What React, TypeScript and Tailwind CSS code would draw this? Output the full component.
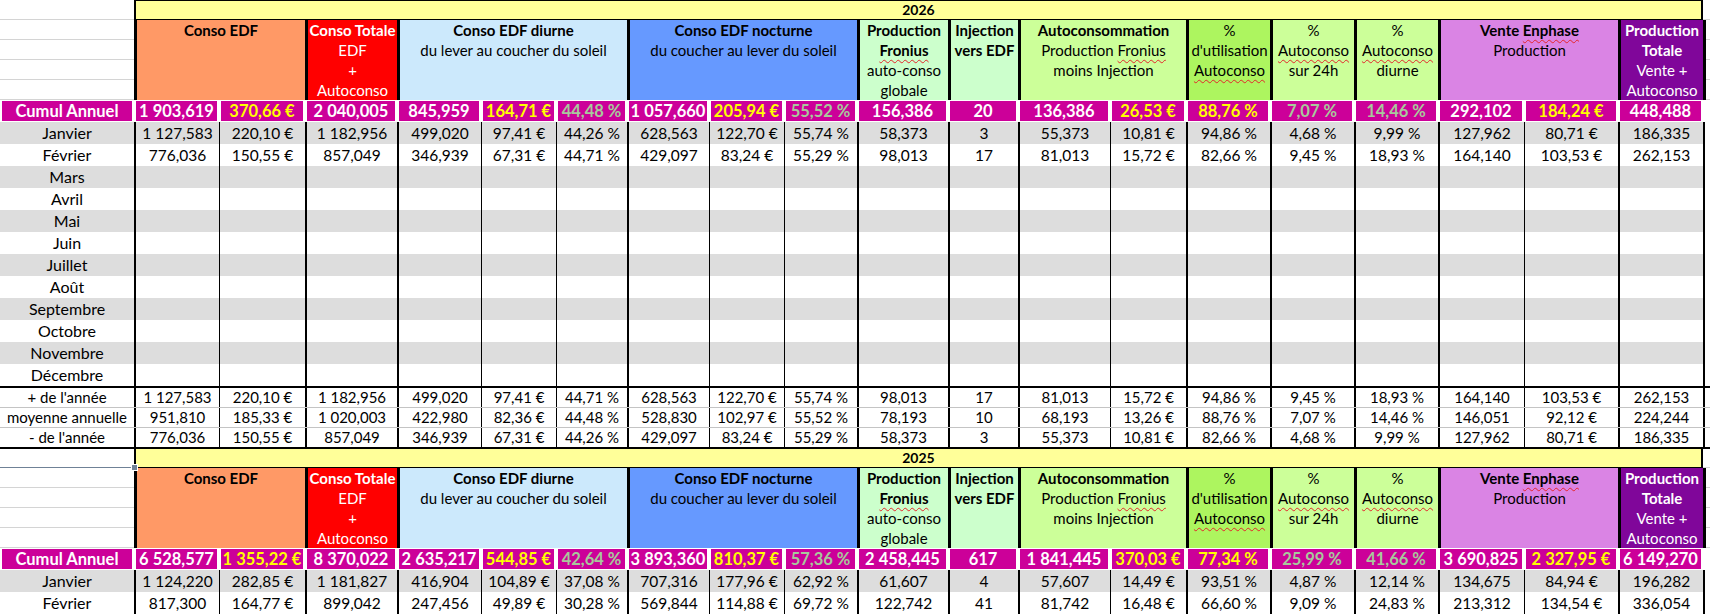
import React from 'react';

type Tone = 'w' | 'y' | 'g';
type CumulCell = [string, Tone];

// 134 px de libellés, 19 colonnes de données, une marge de feuille à droite
const COLS =
  'grid grid-cols-[134px_85px_86px_92px_84px_75px_71px_82px_75px_73px_91px_70px_92px_76px_84px_84px_84px_86px_94px_85px_7px]';

// true = début de groupe (trait épais), false = sous-colonne (trait fin)
const THICK = [true, false, true, true, false, false, true, false, false, true, true, true, false, true, true, true, true, false, true];

const edge = (i: number) => (THICK[i] ? 'border-l-2 border-black' : 'border-l border-black');

const MONTHS = ['Janvier', 'Février', 'Mars', 'Avril', 'Mai', 'Juin', 'Juillet', 'Août', 'Septembre', 'Octobre', 'Novembre', 'Décembre'];

const TONE: Record<Tone, string> = {
  w: 'text-white',
  y: 'text-[#ffff00]',
  g: 'text-[#a8c99c]',
};

const Wavy = ({ children }: { children: React.ReactNode }) => (
  <span className="underline decoration-wavy decoration-[#e3262b] decoration-1 underline-offset-[3px]">{children}</span>
);

interface HeadCell {
  span: string;
  bg: string;
  lines: React.ReactNode[];
}

const HEAD: HeadCell[] = [
  { span: 'col-span-2', bg: 'bg-[#ff9966]', lines: [<b>Conso EDF</b>] },
  { span: 'col-span-1', bg: 'bg-[#ff0000] text-white', lines: [<b>Conso Totale</b>, 'EDF', '+', <Wavy>Autoconso</Wavy>] },
  { span: 'col-span-3', bg: 'bg-[#cce9fc]', lines: [<b>Conso EDF diurne</b>, 'du lever au coucher du soleil'] },
  { span: 'col-span-3', bg: 'bg-[#6699ff]', lines: [<b>Conso EDF nocturne</b>, 'du coucher au lever du soleil'] },
  { span: 'col-span-1', bg: 'bg-[#ccffcc]', lines: [<b>Production</b>, <b><Wavy>Fronius</Wavy></b>, 'auto-conso', 'globale'] },
  { span: 'col-span-1', bg: 'bg-[#ccffcc]', lines: [<b>Injection</b>, <b>vers EDF</b>] },
  {
    span: 'col-span-2',
    bg: 'bg-[#ccff99]',
    lines: [<b>Autoconsommation</b>, <>Production <Wavy>Fronius</Wavy></>, 'moins Injection'],
  },
  { span: 'col-span-1', bg: 'bg-[#adf55f]', lines: ['%', "d'utilisation", <Wavy>Autoconso</Wavy>] },
  { span: 'col-span-1', bg: 'bg-[#ccff99]', lines: ['%', <Wavy>Autoconso</Wavy>, 'sur 24h'] },
  { span: 'col-span-1', bg: 'bg-[#ccff99]', lines: ['%', <Wavy>Autoconso</Wavy>, 'diurne'] },
  { span: 'col-span-2', bg: 'bg-[#da84e4]', lines: [<b>Vente <Wavy>Enphase</Wavy></b>, 'Production'] },
  {
    span: 'col-span-1',
    bg: 'bg-[#80069a] text-white',
    lines: [<b>Production</b>, <b>Totale</b>, 'Vente +', <Wavy>Autoconso</Wavy>],
  },
];

const C2026: CumulCell[] = [
  ['1 903,619', 'w'], ['370,66 €', 'y'], ['2 040,005', 'w'], ['845,959', 'w'], ['164,71 €', 'y'], ['44,48 %', 'g'],
  ['1 057,660', 'w'], ['205,94 €', 'y'], ['55,52 %', 'g'], ['156,386', 'w'], ['20', 'w'], ['136,386', 'w'],
  ['26,53 €', 'y'], ['88,76 %', 'y'], ['7,07 %', 'g'], ['14,46 %', 'g'], ['292,102', 'w'], ['184,24 €', 'y'], ['448,488', 'w'],
];

const C2025: CumulCell[] = [
  ['6 528,577', 'w'], ['1 355,22 €', 'y'], ['8 370,022', 'w'], ['2 635,217', 'w'], ['544,85 €', 'y'], ['42,64 %', 'g'],
  ['3 893,360', 'w'], ['810,37 €', 'y'], ['57,36 %', 'g'], ['2 458,445', 'w'], ['617', 'w'], ['1 841,445', 'w'],
  ['370,03 €', 'y'], ['77,34 %', 'y'], ['25,99 %', 'g'], ['41,66 %', 'g'], ['3 690,825', 'w'], ['2 327,95 €', 'y'], ['6 149,270', 'w'],
];

const M2026: string[][] = [
  ['1 127,583', '220,10 €', '1 182,956', '499,020', '97,41 €', '44,26 %', '628,563', '122,70 €', '55,74 %', '58,373', '3', '55,373', '10,81 €', '94,86 %', '4,68 %', '9,99 %', '127,962', '80,71 €', '186,335'],
  ['776,036', '150,55 €', '857,049', '346,939', '67,31 €', '44,71 %', '429,097', '83,24 €', '55,29 %', '98,013', '17', '81,013', '15,72 €', '82,66 %', '9,45 %', '18,93 %', '164,140', '103,53 €', '262,153'],
];

const M2025: string[][] = [
  ['1 124,220', '282,85 €', '1 181,827', '416,904', '104,89 €', '37,08 %', '707,316', '177,96 €', '62,92 %', '61,607', '4', '57,607', '14,49 €', '93,51 %', '4,87 %', '12,14 %', '134,675', '84,94 €', '196,282'],
  ['817,300', '164,77 €', '899,042', '247,456', '49,89 €', '30,28 %', '569,844', '114,88 €', '69,72 %', '122,742', '41', '81,742', '16,48 €', '66,60 %', '9,09 %', '24,83 %', '213,312', '134,54 €', '336,054'],
];

const S2026: [string, string[]][] = [
  ["+ de l'année", ['1 127,583', '220,10 €', '1 182,956', '499,020', '97,41 €', '44,71 %', '628,563', '122,70 €', '55,74 %', '98,013', '17', '81,013', '15,72 €', '94,86 %', '9,45 %', '18,93 %', '164,140', '103,53 €', '262,153']],
  ['moyenne annuelle', ['951,810', '185,33 €', '1 020,003', '422,980', '82,36 €', '44,48 %', '528,830', '102,97 €', '55,52 %', '78,193', '10', '68,193', '13,26 €', '88,76 %', '7,07 %', '14,46 %', '146,051', '92,12 €', '224,244']],
  ["- de l'année", ['776,036', '150,55 €', '857,049', '346,939', '67,31 €', '44,26 %', '429,097', '83,24 €', '55,29 %', '58,373', '3', '55,373', '10,81 €', '82,66 %', '4,68 %', '9,99 %', '127,962', '80,71 €', '186,335']],
];

const GridStack = () => (
  <div className="flex flex-col">
    {[0, 1, 2, 3].map((i) => (
      <div key={i} className="h-[20px] border-b border-[#d4d4d4]" />
    ))}
  </div>
);

const Cells = ({ values }: { values: string[] }) => (
  <>
    {THICK.map((_, i) => (
      <div key={i} className={`${edge(i)} text-center whitespace-nowrap`}>
        {values[i] ?? ''}
      </div>
    ))}
    <div className="border-l-2 border-black bg-white" />
  </>
);

const STAT_ROW = [
  'h-[21px] border-t-2 border-black',
  'h-[20px] border-t border-[#c4c4c4]',
  'h-[22px] border-t border-[#c4c4c4] border-b-2 border-b-black',
];

interface YearBlockProps {
  year: string;
  second?: boolean;
  cumul: CumulCell[];
  months: string[][];
  monthCount?: number;
  stats?: [string, string[]][];
}

const YearBlock: React.FC<YearBlockProps> = ({ year, second = false, cumul, months, monthCount = 12, stats }) => (
  <section>
    {/* Année */}
    <div className={`${COLS} ${second ? 'h-[19px]' : 'h-[20px]'}`}>
      <div className={`relative bg-white border-b ${second ? 'border-[#6f8196]' : 'border-[#d4d4d4]'}`}>
        {second && <span className="absolute -right-[4px] -bottom-[4px] h-[7px] w-[7px] border border-white bg-[#6f8196]" />}
      </div>
      <div
        className={`col-span-19 border-x-2 border-black bg-[#ffff99] text-center text-[14px] font-bold ${
          second ? 'border-b leading-[18px]' : 'border-y leading-[18px]'
        }`}
      >
        {year}
      </div>
      <div className="border-b border-[#d4d4d4]" />
    </div>

    {/* En-têtes */}
    <div className={`${COLS} h-[80px]`}>
      <GridStack />
      {HEAD.map((h, i) => (
        <div
          key={i}
          className={`${h.span} ${h.bg} flex flex-col items-center border-l-[3px] border-black text-[15px] leading-[20px] whitespace-nowrap`}
        >
          {h.lines.map((line, j) => (
            <div key={j}>{line}</div>
          ))}
        </div>
      ))}
      <div className="border-l-[3px] border-black">
        <GridStack />
      </div>
    </div>

    {/* Cumul annuel */}
    <div className={`${COLS} h-[22px] bg-white text-[16.5px] font-bold leading-[20px]`}>
      <div className="border-x-2 border-y border-white bg-[#cc0099] text-center text-white whitespace-nowrap">Cumul Annuel</div>
      {cumul.map(([v, tone], i) => (
        <div key={i} className={`border-x-2 border-y border-white bg-[#cc0099] text-center whitespace-nowrap ${TONE[tone]}`}>
          {v}
        </div>
      ))}
      <div />
    </div>

    {/* Mois */}
    {MONTHS.slice(0, monthCount).map((m, i) => (
      <div
        key={m}
        className={`${COLS} h-[22px] text-[15.5px] leading-[22px] ${i % 2 === 0 ? 'bg-[#dddddd]' : 'bg-white'}`}
      >
        <div className="text-center text-[16px] whitespace-nowrap">{m}</div>
        <Cells values={months[i] ?? []} />
      </div>
    ))}

    {/* Statistiques */}
    {stats?.map(([label, values], i) => (
      <div key={label} className={`${COLS} ${STAT_ROW[i]} bg-white text-[15px] leading-[19px]`}>
        <div className="text-center whitespace-nowrap">{label}</div>
        <Cells values={values} />
      </div>
    ))}
  </section>
);

export default function App() {
  return (
    <div className="h-[614px] w-[1710px] overflow-hidden bg-white font-[Lato,sans-serif] text-black">
      <YearBlock year="2026" cumul={C2026} months={M2026} stats={S2026} />
      <YearBlock year="2025" second cumul={C2025} months={M2025} monthCount={2} />
    </div>
  );
}
